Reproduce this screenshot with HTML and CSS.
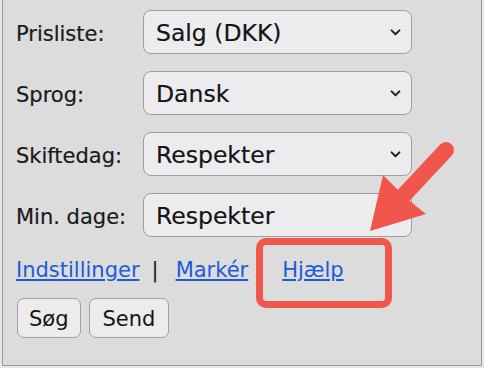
FILE: index.html
```html
<!DOCTYPE html>
<html lang="da">
<head>
<meta charset="utf-8">
<title>Søgning</title>
<link rel="stylesheet" href="styles.css">
</head>
<body>
<div class="panel">
  <div class="form">
    <div class="row">
      <span class="label">Prisliste:</span>
      <div class="select"><span class="value">Salg (DKK)</span><svg class="chev" viewBox="0 0 12 8" width="11" height="7"><path d="M1.5 1.5 L6 6 L10.5 1.5" fill="none" stroke="#222" stroke-width="2.2" stroke-linecap="round" stroke-linejoin="round"/></svg></div>
    </div>
    <div class="row">
      <span class="label">Sprog:</span>
      <div class="select"><span class="value">Dansk</span><svg class="chev" viewBox="0 0 12 8" width="11" height="7"><path d="M1.5 1.5 L6 6 L10.5 1.5" fill="none" stroke="#222" stroke-width="2.2" stroke-linecap="round" stroke-linejoin="round"/></svg></div>
    </div>
    <div class="row">
      <span class="label">Skiftedag:</span>
      <div class="select"><span class="value">Respekter</span><svg class="chev" viewBox="0 0 12 8" width="11" height="7"><path d="M1.5 1.5 L6 6 L10.5 1.5" fill="none" stroke="#222" stroke-width="2.2" stroke-linecap="round" stroke-linejoin="round"/></svg></div>
    </div>
    <div class="row">
      <span class="label">Min. dage:</span>
      <div class="select"><span class="value">Respekter</span><svg class="chev" viewBox="0 0 12 8" width="11" height="7"><path d="M1.5 1.5 L6 6 L10.5 1.5" fill="none" stroke="#222" stroke-width="2.2" stroke-linecap="round" stroke-linejoin="round"/></svg></div>
    </div>
  </div>
  <div class="links">
    <a href="#" class="link">Indstillinger</a>
    <span class="sep">|</span>
    <a href="#" class="link link-mark">Markér</a>
    <a href="#" class="link link-help">Hjælp</a>
  </div>
  <div class="buttons">
    <button class="btn" type="button">Søg</button>
    <button class="btn" type="button">Send</button>
  </div>

  <div class="highlight"></div>
  <svg class="arrow" viewBox="0 0 484 368" width="484" height="368">
    <line x1="445" y1="150" x2="402" y2="196" stroke="#f0564b" stroke-width="16" stroke-linecap="round"/>
    <polygon points="369,231 382,175 398,191 410,202 425,214" fill="#f0564b"/>
  </svg>
</div>
</body>
</html>
```

FILE: styles.css
```css
html, body {
  margin: 0;
  padding: 0;
}
body {
  width: 484px;
  height: 368px;
  background: #e6e6e6;
  font-family: "DejaVu Sans", Verdana, sans-serif;
  color: #1c1c1c;
  overflow: hidden;
}
.panel {
  position: relative;
  margin-left: 2px;
  width: 478px;
  height: 365px;
  background: #dcdcdc;
  border: 1px solid #9c9c9c;
  border-top: none;
  box-sizing: content-box;
}
.form {
  display: flex;
  flex-direction: column;
  gap: 17px;
  padding: 10px 0 0 13px;
}
.row {
  display: flex;
  align-items: center;
  height: 44px;
}
.label {
  width: 127px;
  font-size: 21px;
  line-height: 24px;
  padding-top: 3px;
  color: #1a1a1a;
  -webkit-text-stroke: 0.2px #1a1a1a;
}
.select {
  width: 269px;
  height: 44px;
  box-sizing: border-box;
  display: flex;
  align-items: center;
  justify-content: space-between;
  padding: 2px 10px 0 12px;
  background: #ececee;
  border: 1px solid #9e9e9e;
  border-radius: 8px;
}
.value {
  font-size: 23.5px;
  line-height: 28px;
  color: #141414;
  -webkit-text-stroke: 0.2px #141414;
}
.chev {
  display: block;
  margin-top: -2px;
}
.links {
  display: flex;
  align-items: baseline;
  padding: 21px 0 0 13px;
  font-size: 21px;
  line-height: 24px;
}
.link {
  color: #1d5bd8;
  text-decoration: underline;
  text-decoration-thickness: 2px;
  text-underline-offset: 2px;
}
.sep {
  margin-left: 12px;
  color: #1a1a1a;
}
.link-mark {
  margin-left: 17px;
}
.link-help {
  margin-left: 34px;
}
.buttons {
  display: flex;
  gap: 8px;
  padding: 16px 0 0 14px;
}
.btn {
  height: 40px;
  padding: 2px 11px 0;
  font-family: "DejaVu Sans", Verdana, sans-serif;
  font-size: 21px;
  color: #141414;
  background: #ececec;
  border: 1px solid #a0a0a0;
  border-radius: 7px;
}
.btn:last-child {
  padding: 2px 13px 0;
}
.highlight {
  position: absolute;
  left: 253px;
  top: 238px;
  width: 136px;
  height: 70px;
  box-sizing: border-box;
  border: 7px solid #f0564b;
  border-radius: 10px;
}
.arrow {
  position: absolute;
  left: -2px;
  top: 0;
  pointer-events: none;
}
```
